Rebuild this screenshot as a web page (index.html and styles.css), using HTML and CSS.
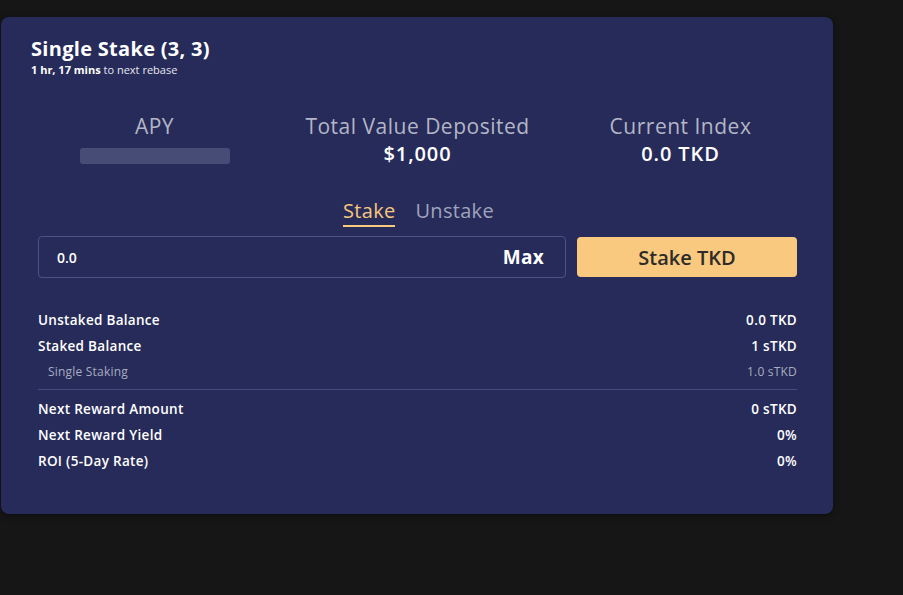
FILE: index.html
```html
<!DOCTYPE html>
<html>
<head>
<meta charset="utf-8">
<link rel="stylesheet" href="styles.css">
</head>
<body>
<div class="card">
  <div class="header">
    <div class="title">Single Stake (3, 3)</div>
    <div class="subtitle"><b>1 hr, 17 mins</b> to next rebase</div>
  </div>
  <div class="stats">
    <div class="stat">
      <div class="stat-label">APY</div>
      <div class="skeleton"></div>
    </div>
    <div class="stat">
      <div class="stat-label">Total Value Deposited</div>
      <div class="stat-value">$1,000</div>
    </div>
    <div class="stat">
      <div class="stat-label">Current Index</div>
      <div class="stat-value">0.0 TKD</div>
    </div>
  </div>
  <div class="tabs">
    <div class="tab active">Stake</div>
    <div class="tab">Unstake</div>
  </div>
  <div class="action">
    <div class="input">
      <span class="input-value">0.0</span>
      <span class="max">Max</span>
    </div>
    <div class="button">Stake TKD</div>
  </div>
  <div class="data">
    <div class="row"><span>Unstaked Balance</span><span>0.0 TKD</span></div>
    <div class="row"><span>Staked Balance</span><span>1 sTKD</span></div>
    <div class="row sub"><span>Single Staking</span><span>1.0 sTKD</span></div>
    <div class="divider"></div>
    <div class="row"><span>Next Reward Amount</span><span>0 sTKD</span></div>
    <div class="row"><span>Next Reward Yield</span><span>0%</span></div>
    <div class="row"><span>ROI (5-Day Rate)</span><span>0%</span></div>
  </div>
</div>
</body>
</html>
```
FILE: styles.css
```css
html, body {
  margin: 0;
  padding: 0;
  background: #161616;
  height: 100%;
}
body {
  font-family: "Open Sans", Lato, sans-serif;
  color: #ffffff;
  padding-top: 17px;
  padding-left: 1px;
  box-sizing: border-box;
}
.card {
  width: 832px;
  height: 497px;
  box-sizing: border-box;
  background: #262b5a;
  border-radius: 8px;
  padding: 19px 36px 0 37px;
  box-shadow: 0 2px 6px rgba(0,0,0,0.4);
}
.header {
  margin-left: -7px;
}
.title {
  font-size: 20px;
  font-weight: 700;
  line-height: 26px;
  letter-spacing: 0.3px;
}
.subtitle {
  font-size: 11px;
  line-height: 16px;
  color: #e6e7ee;
}
.subtitle b {
  font-weight: 700;
  color: #fff;
}
.stats {
  display: grid;
  grid-template-columns: repeat(3, 1fr);
  margin: 35px -15px 0 -15px;
}
.stat {
  display: flex;
  flex-direction: column;
  align-items: center;
}
.stat-label {
  font-size: 21px;
  line-height: 26px;
  color: #b4b6c6;
  letter-spacing: 0.5px;
}
.stat-value {
  font-size: 20px;
  font-weight: 600;
  line-height: 26px;
  margin-top: 2px;
  letter-spacing: 0.9px;
}
.skeleton {
  width: 150px;
  height: 16px;
  border-radius: 3px;
  background: #474c76;
  margin-top: 9px;
}
.tabs {
  display: flex;
  justify-content: center;
  gap: 20px;
  margin-top: 31px;
  padding-left: 2px;
}
.tab {
  font-size: 20px;
  line-height: 26px;
  color: #a0a3bd;
  padding-bottom: 1px;
  border-bottom: 2px solid transparent;
  letter-spacing: 0.3px;
}
.tab.active {
  color: #f6c77d;
  border-bottom-color: #f6c77d;
}
.action {
  display: flex;
  gap: 11px;
  margin-top: 9px;
}
.input {
  flex: 0 0 528px;
  height: 42px;
  box-sizing: border-box;
  border: 1px solid #4c5285;
  border-radius: 4px;
  display: flex;
  align-items: center;
  justify-content: space-between;
  padding: 0 21px 0 18px;
}
.input-value {
  font-size: 14px;
  font-weight: 600;
}
.max {
  font-size: 19px;
  font-weight: 700;
  letter-spacing: 0.3px;
}
.button {
  flex: 1;
  height: 40px;
  margin-top: 1px;
  background: #f8c97f;
  border-radius: 4px;
  color: #2e2b28;
  font-size: 20px;
  font-weight: 600;
  display: flex;
  align-items: center;
  justify-content: center;
}
.data {
  margin-top: 29px;
}
.row {
  display: flex;
  justify-content: space-between;
  font-size: 13.5px;
  font-weight: 600;
  line-height: 26px;
  letter-spacing: 0.3px;
}
.row.sub {
  font-size: 12px;
  font-weight: 400;
  color: #a9abc0;
  line-height: 25px;
  padding-left: 10px;
  letter-spacing: 0.2px;
}
.divider {
  height: 1px;
  background: #454b7e;
  margin: 5px 0 6px;
}
```
